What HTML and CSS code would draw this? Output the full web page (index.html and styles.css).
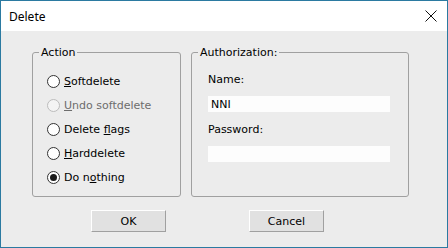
FILE: index.html
```html
<!DOCTYPE html>
<html lang="en">
<head>
    <meta charset="UTF-8">
    <title>Delete</title>
    <link rel="stylesheet" href="styles.css">
</head>
<body>

<div class="window">
    <div class="titlebar">
        <span class="title">Delete</span>
        <svg class="close" width="12" height="12" viewBox="0 0 12 12">
            <path d="M0.5 0.5 L11.5 11.5 M11.5 0.5 L0.5 11.5" stroke="#111" stroke-width="1" fill="none"/>
        </svg>
    </div>

    <div class="content">
        <div class="groups">
            <fieldset class="group group-action">
                <legend>Action</legend>
                <div class="group-body">
                    <div class="radio-row"><span class="radio"></span><span><u>S</u>oftdelete</span></div>
                    <div class="radio-row disabled"><span class="radio"></span><span><u>U</u>ndo softdelete</span></div>
                    <div class="radio-row"><span class="radio"></span><span>Delete <u>f</u>lags</span></div>
                    <div class="radio-row"><span class="radio"></span><span><u>H</u>arddelete</span></div>
                    <div class="radio-row"><span class="radio checked"></span><span>Do n<u>o</u>thing</span></div>
                </div>
            </fieldset>

            <fieldset class="group group-auth">
                <legend>Authorization:</legend>
                <div class="group-body">
                    <label class="field-label" for="name">Name:</label>
                    <input type="text" id="name" class="field" value="NNI">
                    <label class="field-label" for="password">Password:</label>
                    <input type="password" id="password" class="field">
                </div>
            </fieldset>
        </div>

        <div class="buttons">
            <button class="btn btn-ok">OK</button>
            <button class="btn btn-cancel">Cancel</button>
        </div>
    </div>
</div>

</body>
</html>
```

FILE: styles.css
```css
body {
    margin: 0;
    font-family: Tahoma, "DejaVu Sans", sans-serif;
    font-size: 11px;
    color: #000;
}
.window {
    width: 448px;
    height: 248px;
    box-sizing: border-box;
    border: 1px solid #2b7aa1;
    background: #ececec;
    display: flex;
    flex-direction: column;
}
.titlebar {
    height: 30px;
    background: #fff;
    display: flex;
    align-items: center;
    justify-content: space-between;
    padding: 0 10px 0 8px;
}
.title {
    font-family: "Noto Sans", sans-serif;
    font-size: 12px;
}
.content {
    flex: 1;
    padding: 15px 0 0 31px;
}
.groups {
    display: flex;
    gap: 10px;
}
.group {
    margin: 0;
    padding: 0;
    border: 1px solid #a0a0a0;
    border-radius: 3px;
    height: 151px;
    box-sizing: border-box;
}
.group legend {
    margin-left: 6px;
    padding: 0 2px;
    line-height: 13px;
}
.group-action {
    width: 149px;
}
.group-action .group-body {
    padding: 10px 0 0 14px;
}
.group-auth {
    width: 218px;
}
.group-auth .group-body {
    padding: 14px 0 0 16px;
}
.radio-row {
    display: flex;
    align-items: center;
    gap: 4px;
    height: 24px;
}
.radio {
    width: 13px;
    height: 13px;
    box-sizing: border-box;
    border: 1px solid #333;
    border-radius: 50%;
    background: #fff;
    display: flex;
    align-items: center;
    justify-content: center;
}
.radio.checked::after {
    content: "";
    width: 7px;
    height: 7px;
    border-radius: 50%;
    background: #1a1a1a;
}
.radio-row.disabled {
    color: #6d6d6d;
}
.radio-row.disabled .radio {
    border-color: #bcbcbc;
    background: #f4f4f4;
}
.field-label {
    display: block;
    line-height: 13px;
}
.field {
    display: block;
    width: 182px;
    height: 16px;
    box-sizing: border-box;
    border: none;
    background: #fdfdfd;
    font: inherit;
    padding: 0 3px;
    margin: 10px 0 11px 0;
}
.buttons {
    display: flex;
    gap: 83px;
    margin: 13px 0 0 59px;
}
.btn {
    width: 75px;
    height: 22px;
    font: inherit;
    background: #e1e1e1;
    border: 1px solid;
    border-color: #fff #a0a0a0 #a0a0a0 #fff;
    padding: 0;
}
```
